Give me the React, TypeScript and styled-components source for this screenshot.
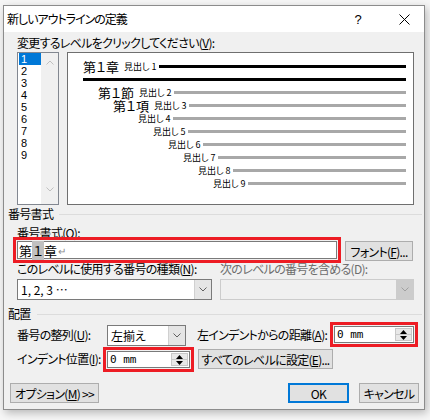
import styled, { createGlobalStyle } from "styled-components";

const GlobalStyle = createGlobalStyle`
  html, body {
    margin: 0;
    padding: 0;
  }
  body {
    width: 430px;
    height: 420px;
    overflow: hidden;
    background: #f6f6f6;
    font-family: "Noto Sans CJK JP", "Noto Sans", sans-serif;
    font-size: 12px;
    letter-spacing: -0.7px;
    font-feature-settings: "palt";
    color: #000;
  }
`;

const Dialog = styled.div`
  margin: 5px 0 0 3px;
  width: 422px;
  height: 405px;
  box-sizing: border-box;
  border: 1px solid #8c8c8c;
  background: #f0f0f0;
  box-shadow: 2px 3px 8px rgba(0, 0, 0, 0.25);
  display: flex;
  flex-direction: column;
`;

const TitleBar = styled.div`
  height: 26px;
  flex: none;
  background: #fff;
  display: flex;
  align-items: center;
  padding-left: 3px;
`;

const Title = styled.div`
  flex: 1;
  font-size: 12px;
  line-height: 14px;
  letter-spacing: -1px;
`;

const TitleButton = styled.div<{ $w: number }>`
  width: ${(p) => p.$w}px;
  height: 26px;
  display: flex;
  align-items: center;
  justify-content: center;
  font-family: "Liberation Sans", sans-serif;
  font-size: 13px;
  letter-spacing: 0;
`;

const Body = styled.div`
  flex: 1;
  display: flex;
  flex-direction: column;
  padding: 4px 10px 0 13px;
`;

const Label = styled.div<{ $disabled?: boolean; $mt?: number; $w?: number; $ml?: number }>`
  line-height: 14px;
  height: 14px;
  white-space: nowrap;
  color: ${(p) => (p.$disabled ? "#6d6d6d" : "#000")};
  margin-top: ${(p) => p.$mt ?? 0}px;
  margin-left: ${(p) => p.$ml ?? 0}px;
  width: ${(p) => (p.$w ? `${p.$w}px` : "auto")};
  flex: none;
`;

const TopRow = styled.div`
  display: flex;
  gap: 8px;
  height: 153px;
  margin-top: 2px;
`;

const LevelList = styled.div`
  width: 42px;
  box-sizing: border-box;
  border: 1px solid #828790;
  background: #fff;
  display: flex;
`;

const LevelItems = styled.div`
  width: 22px;
  padding: 0 0 0 1px;
`;

const LevelItem = styled.div<{ $selected?: boolean }>`
  height: 12px;
  line-height: 12px;
  padding-left: 2px;
  font-family: "Liberation Sans Narrow", "Liberation Sans", sans-serif;
  font-size: 11px;
  letter-spacing: 0;
  overflow: hidden;
  background: ${(p) => (p.$selected ? "#0078d7" : "transparent")};
  color: ${(p) => (p.$selected ? "#fff" : "#000")};
`;

const ScrollBar = styled.div`
  width: 17px;
  background: #f0f0f0;
  display: flex;
  flex-direction: column;
  justify-content: space-between;
  align-items: center;
  padding: 7px 0 12px;
`;

const Preview = styled.div`
  flex: 1;
  box-sizing: border-box;
  border: 1px solid #6f6f6f;
  background: #fff;
  padding: 7px 7px 0 15px;
  letter-spacing: 0;
`;

const PreviewRow = styled.div<{ $indent: number }>`
  height: 13px;
  display: flex;
  align-items: center;
  padding-left: ${(p) => p.$indent}px;
  white-space: nowrap;
`;

const BigText = styled.span`
  font-size: 13px;
  line-height: 13px;
  margin-right: 5px;
`;

const SmallText = styled.span`
  font-size: 9px;
  line-height: 13px;
  margin-right: 2px;
`;

const Rule = styled.div<{ $color: string }>`
  flex: 1;
  height: 3px;
  background: ${(p) => p.$color};
`;

const SectionHeader = styled.div<{ $mt: number }>`
  display: flex;
  align-items: center;
  margin: ${(p) => p.$mt}px -8px 0 -9px;
  height: 14px;
  line-height: 14px;
  &::after {
    content: "";
    flex: 1;
    height: 1px;
    background: #dcdcdc;
    margin-left: 6px;
  }
`;

const Row = styled.div<{ $mt: number; $h: number }>`
  display: flex;
  align-items: flex-start;
  margin-top: ${(p) => p.$mt}px;
  height: ${(p) => p.$h}px;
`;

const TextInput = styled.div`
  width: 320px;
  height: 18px;
  box-sizing: border-box;
  border: 1px solid #7a7a7a;
  background: #fff;
  outline: 3px solid #ed1c24;
  outline-offset: 1px;
  display: flex;
  align-items: center;
  padding-left: 1px;
  font-size: 13px;
  letter-spacing: 0;
`;

const Highlight = styled.span`
  background: #c0c0c0;
  padding: 0 1px;
`;

const ReturnMark = styled.span`
  color: #8a8a8a;
  font-size: 10px;
  margin-left: 1px;
`;

const Button = styled.div<{ $w: number; $primary?: boolean; $ml?: number }>`
  width: ${(p) => p.$w}px;
  height: 20px;
  box-sizing: border-box;
  border: ${(p) => (p.$primary ? "2px solid #0078d7" : "1px solid #adadad")};
  background: #e1e1e1;
  margin-left: ${(p) => p.$ml ?? 0}px;
  display: flex;
  align-items: center;
  justify-content: center;
  white-space: nowrap;
  flex: none;
`;

const Grid = styled.div<{ $mt: number }>`
  display: grid;
  grid-template-columns: 195px 194px;
  column-gap: 8px;
  row-gap: 3px;
  margin-top: ${(p) => p.$mt}px;
`;

const SelectBox = styled.div<{ $w?: number; $disabled?: boolean }>`
  width: ${(p) => (p.$w ? `${p.$w}px` : "auto")};
  height: 21px;
  box-sizing: border-box;
  border: 1px solid ${(p) => (p.$disabled ? "#cccccc" : "#7a7a7a")};
  background: ${(p) => (p.$disabled ? "#f0f0f0" : "#fff")};
  display: flex;
  flex: none;
`;

const SelectText = styled.div`
  flex: 1;
  padding-left: 3px;
  line-height: 19px;
  font-size: 12px;
  letter-spacing: 0;
  white-space: nowrap;
`;

const SelectArrow = styled.div<{ $disabled?: boolean }>`
  width: 16px;
  background: ${(p) => (p.$disabled ? "#cccccc" : "#e5e5e5")};
  border-left: 1px solid ${(p) => (p.$disabled ? "#cccccc" : "#d0d0d0")};
  display: flex;
  align-items: center;
  justify-content: center;
`;

const SpinBox = styled.div<{ $w: number; $ml?: number; $mt?: number }>`
  width: ${(p) => p.$w}px;
  height: 17px;
  box-sizing: border-box;
  border: 1px solid #7a7a7a;
  background: #fff;
  outline: 3px solid #ed1c24;
  outline-offset: 1px;
  margin-left: ${(p) => (p.$ml === undefined ? "auto" : `${p.$ml}px`)};
  margin-top: ${(p) => p.$mt ?? 0}px;
  display: flex;
  flex: none;
`;

const SpinText = styled.div`
  flex: 1;
  padding-left: 2px;
  line-height: 15px;
  font-family: "DejaVu Sans Mono", monospace;
  font-size: 11px;
  letter-spacing: 0;
`;

const SpinButtons = styled.div`
  width: 15px;
  margin: 1px;
  border: 1px solid #c8c8c8;
  background: #e8e8e8;
  display: flex;
  flex-direction: column;
`;

const SpinHalf = styled.div`
  flex: 1;
  display: flex;
  align-items: center;
  justify-content: center;
  & + & {
    border-top: 1px solid #c8c8c8;
  }
`;

const Footer = styled.div`
  display: flex;
  margin: 14px -5px 0 -7px;
`;

const Spacer = styled.div`
  flex: 1;
`;

const Chevron = ({ up, color }: { up?: boolean; color: string }) => (
  <svg width="8" height="5" viewBox="0 0 8 5">
    <polyline
      points={up ? "0.5,4.5 4,1 7.5,4.5" : "0.5,0.5 4,4 7.5,0.5"}
      fill="none"
      stroke={color}
      strokeWidth="1"
    />
  </svg>
);

const Triangle = ({ up }: { up?: boolean }) => (
  <svg width="7" height="4" viewBox="0 0 7 4">
    <polygon points={up ? "0,4 3.5,0 7,4" : "0,0 3.5,4 7,0"} fill="#000" />
  </svg>
);

const Spin = ({ w, ml, mt }: { w: number; ml?: number; mt?: number }) => (
  <SpinBox $w={w} $ml={ml} $mt={mt}>
    <SpinText>0 mm</SpinText>
    <SpinButtons>
      <SpinHalf>
        <Triangle up />
      </SpinHalf>
      <SpinHalf>
        <Triangle />
      </SpinHalf>
    </SpinButtons>
  </SpinBox>
);

const previewRows = [
  { indent: 15, big: "第１節", small: "見出し 2" },
  { indent: 30, big: "第１項", small: "見出し 3" },
  { indent: 55, small: "見出し 4" },
  { indent: 70, small: "見出し 5" },
  { indent: 85, small: "見出し 6" },
  { indent: 100, small: "見出し 7" },
  { indent: 115, small: "見出し 8" },
  { indent: 130, small: "見出し 9" },
];

export default function App() {
  return (
    <>
      <GlobalStyle />
      <Dialog>
        <TitleBar>
          <Title>新しいアウトラインの定義</Title>
          <TitleButton $w={52}>?</TitleButton>
          <TitleButton $w={40}>
            <svg width="11" height="11" viewBox="0 0 11 11">
              <path d="M0.5 0.5 L10.5 10.5 M10.5 0.5 L0.5 10.5" stroke="#000" strokeWidth="1" />
            </svg>
          </TitleButton>
        </TitleBar>
        <Body>
          <Label>
            変更するレベルをクリックしてください(<u>V</u>):
          </Label>
          <TopRow>
            <LevelList>
              <LevelItems>
                {[1, 2, 3, 4, 5, 6, 7, 8, 9].map((n) => (
                  <LevelItem key={n} $selected={n === 1}>
                    {n}
                  </LevelItem>
                ))}
              </LevelItems>
              <ScrollBar>
                <Chevron up color="#c0c0c0" />
                <Chevron color="#c0c0c0" />
              </ScrollBar>
            </LevelList>
            <Preview>
              <PreviewRow $indent={0}>
                <BigText>第１章</BigText>
                <SmallText>見出し 1</SmallText>
                <Rule $color="#000" />
              </PreviewRow>
              <PreviewRow $indent={0}>
                <Rule $color="#000" />
              </PreviewRow>
              {previewRows.map((r) => (
                <PreviewRow key={r.small} $indent={r.indent}>
                  {r.big && <BigText>{r.big}</BigText>}
                  <SmallText>{r.small}</SmallText>
                  <Rule $color="#a8a8a8" />
                </PreviewRow>
              ))}
            </Preview>
          </TopRow>

          <SectionHeader $mt={2}>番号書式</SectionHeader>
          <Label $mt={5}>
            番号書式(<u>O</u>):
          </Label>
          <Row $mt={1} $h={20}>
            <TextInput>
              第<Highlight>１</Highlight>章<ReturnMark>↵</ReturnMark>
            </TextInput>
            <Button $w={68} $ml={8}>
              フォント(<u>F</u>)...
            </Button>
          </Row>
          <Grid $mt={1}>
            <Label>
              このレベルに使用する番号の種類(<u>N</u>):
            </Label>
            <Label $disabled>次のレベルの番号を含める(D):</Label>
            <SelectBox>
              <SelectText>1, 2, 3 …</SelectText>
              <SelectArrow>
                <Chevron color="#606060" />
              </SelectArrow>
            </SelectBox>
            <SelectBox $disabled>
              <SelectText />
              <SelectArrow $disabled>
                <Chevron color="#a0a0a0" />
              </SelectArrow>
            </SelectBox>
          </Grid>

          <SectionHeader $mt={7}>配置</SectionHeader>
          <Row $mt={4} $h={21}>
            <Label $w={90} $mt={3}>
              番号の整列(<u>U</u>):
            </Label>
            <SelectBox $w={79}>
              <SelectText>左揃え</SelectText>
              <SelectArrow>
                <Chevron color="#606060" />
              </SelectArrow>
            </SelectBox>
            <Label $mt={3} $ml={11}>
              左インデントからの距離(<u>A</u>):
            </Label>
            <Spin w={80} mt={1} />
          </Row>
          <Row $mt={3} $h={20}>
            <Label $w={90} $mt={3}>
              インデント位置(<u>I</u>):
            </Label>
            <Spin w={83} ml={0} mt={2} />
            <Button $w={135} $ml={8}>
              すべてのレベルに設定(<u>E</u>)...
            </Button>
          </Row>

          <Footer>
            <Button $w={89}>
              オプション(<u>M</u>) &gt;&gt;
            </Button>
            <Spacer />
            <Button $w={61} $primary>
              OK
            </Button>
            <Button $w={60} $ml={10}>
              キャンセル
            </Button>
          </Footer>
        </Body>
      </Dialog>
    </>
  );
}
